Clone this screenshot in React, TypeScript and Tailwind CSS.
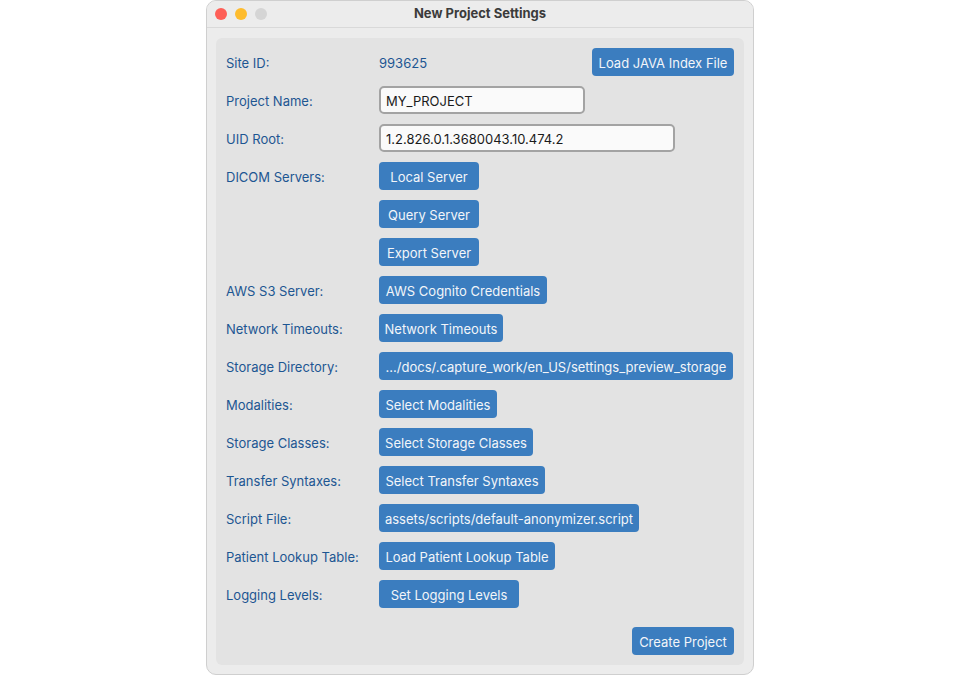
import type { ReactNode } from "react";

const font = { fontFamily: "Inter, 'Noto Sans', 'Liberation Sans', sans-serif" };

function Btn({ w, children }: { w: string; children: ReactNode }) {
  return (
    <button
      className={`h-[28px] shrink-0 rounded-[4px] bg-[#3b7dbf] pt-[1px] text-center text-[13px] leading-[28px] text-[#f2f5f9] whitespace-nowrap ${w}`}
    >
      {children}
    </button>
  );
}

function Row({ label, children }: { label: string; children?: ReactNode }) {
  return (
    <div className="flex h-[28px] items-center">
      <div className="w-[153px] shrink-0 pt-[4px] text-[13px] text-[#1d5692]">{label}</div>
      <div className="flex flex-1 items-center">{children}</div>
    </div>
  );
}

export default function App() {
  return (
    <div className="flex h-[676px] w-[960px] justify-center bg-white" style={font}>
      <div className="flex h-[675px] w-[548px] flex-col overflow-hidden rounded-b-[10px] rounded-t-[10px] border border-[#cfcfcf] bg-[#ececec]">
        <div className="relative flex h-[27px] shrink-0 items-center justify-center border-b border-[#d9d9d9] bg-[#ececec]">
          <div className="absolute left-[8px] top-[7px] flex gap-[8px]">
            <span className="h-[12px] w-[12px] rounded-full bg-[#fe5f57]" />
            <span className="h-[12px] w-[12px] rounded-full bg-[#febc2e]" />
            <span className="h-[12px] w-[12px] rounded-full bg-[#d5d5d5]" />
          </div>
          <span className="text-[13px] font-bold text-[#3b3b3b]">New Project Settings</span>
        </div>
        <div className="mx-[9px] mb-[9px] mt-[10px] flex flex-1 flex-col rounded-[6px] bg-[#e3e3e3] px-[10px] pb-[10px] pt-[10px]">
          <div className="flex flex-col gap-[10px]">
            <Row label="Site ID:">
              <span className="flex-1 pt-[4px] text-[13px] text-[#1d5692]">993625</span>
              <Btn w="w-[142px]">Load JAVA Index File</Btn>
            </Row>
            <Row label="Project Name:">
              <input
                readOnly
                value="MY_PROJECT"
                className="h-[28px] w-[206px] rounded-[5px] border-2 border-[#a3a3a3] bg-[#fafafa] px-[5px] pt-[1px] text-[13px] text-[#1a1a1a] outline-none"
              />
            </Row>
            <Row label="UID Root:">
              <input
                readOnly
                value="1.2.826.0.1.3680043.10.474.2"
                className="h-[28px] w-[296px] rounded-[5px] border-2 border-[#a3a3a3] bg-[#fafafa] px-[5px] pt-[1px] text-[13px] text-[#1a1a1a] outline-none"
              />
            </Row>
            <Row label="DICOM Servers:">
              <Btn w="w-[100px]">Local Server</Btn>
            </Row>
            <Row label="">
              <Btn w="w-[100px]">Query Server</Btn>
            </Row>
            <Row label="">
              <Btn w="w-[100px]">Export Server</Btn>
            </Row>
            <Row label="AWS S3 Server:">
              <Btn w="w-[168px]">AWS Cognito Credentials</Btn>
            </Row>
            <Row label="Network Timeouts:">
              <Btn w="w-[124px]">Network Timeouts</Btn>
            </Row>
            <Row label="Storage Directory:">
              <Btn w="w-[354px]">.../docs/.capture_work/en_US/settings_preview_storage</Btn>
            </Row>
            <Row label="Modalities:">
              <Btn w="w-[118px]">Select Modalities</Btn>
            </Row>
            <Row label="Storage Classes:">
              <Btn w="w-[154px]">Select Storage Classes</Btn>
            </Row>
            <Row label="Transfer Syntaxes:">
              <Btn w="w-[166px]">Select Transfer Syntaxes</Btn>
            </Row>
            <Row label="Script File:">
              <Btn w="w-[260px]">assets/scripts/default-anonymizer.script</Btn>
            </Row>
            <Row label="Patient Lookup Table:">
              <Btn w="w-[176px]">Load Patient Lookup Table</Btn>
            </Row>
            <Row label="Logging Levels:">
              <Btn w="w-[140px]">Set Logging Levels</Btn>
            </Row>
          </div>
          <div className="mt-[19px] flex justify-end">
            <Btn w="w-[102px]">Create Project</Btn>
          </div>
        </div>
      </div>
    </div>
  );
}
